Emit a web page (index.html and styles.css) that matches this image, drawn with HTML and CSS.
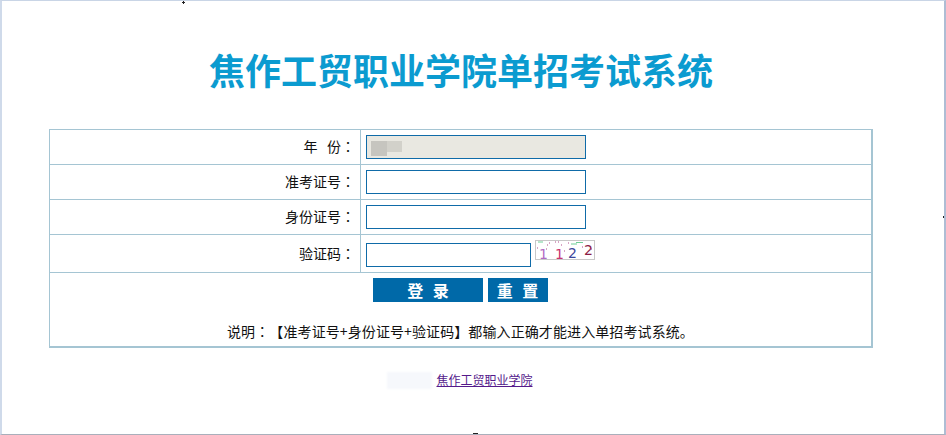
FILE: index.html
```html
<!DOCTYPE html>
<html lang="zh-CN">
<head>
  <meta charset="UTF-8">
  <title>焦作工贸职业学院单招考试系统</title>
  <link rel="stylesheet" href="styles.css">
</head>
<body>
  <div class="frame">
    <span class="mark mark-top"></span>
    <span class="mark mark-right"></span>
    <span class="mark mark-bottom"></span>

    <h1 class="title">焦作工贸职业学院单招考试系统</h1>

    <form class="login">
      <table class="login-table">
        <tr class="row">
          <td class="label">年&nbsp;&nbsp;&nbsp;份<span class="colon" lang="zh-TW">：</span></td>
          <td class="field">
            <span class="year">
              <input class="input input-disabled" type="text" disabled>
              <span class="smudge"><i></i><b></b></span>
            </span>
          </td>
        </tr>
        <tr class="row">
          <td class="label">准考证号<span class="colon" lang="zh-TW">：</span></td>
          <td class="field"><input class="input" type="text"></td>
        </tr>
        <tr class="row">
          <td class="label">身份证号<span class="colon" lang="zh-TW">：</span></td>
          <td class="field"><input class="input" type="text"></td>
        </tr>
        <tr class="row row-code">
          <td class="label">验证码<span class="colon" lang="zh-TW">：</span></td>
          <td class="field">
            <div class="code-wrap">
              <input class="input input-code" type="text">
              <svg class="captcha" width="60" height="20" viewBox="0 0 60 20">
                <rect x="0.5" y="0.5" width="59" height="19" fill="#fff" stroke="#c8c8c8"/>
                <path d="M3 2h5M36 4h6M41 2.500h7" stroke="#6fcf97" stroke-width="1"/>
                <path d="M20 2h1M23 2h1M33 3h1M26 5h1M12 5h1M14 3h1M2 8h1M11 9h1M29 11h1M47 7h1M56 9h1" stroke="#b04a8a" stroke-width="1"/>
                <text class="digit" x="4" y="19" fill="#b06cc4">1</text>
                <text class="digit" x="20" y="19" fill="#c8356f">1</text>
                <text class="digit" x="33" y="18" fill="#3a469c">2</text>
                <text class="digit" x="49" y="15" fill="#8c1c46">2</text>
              </svg>
            </div>
          </td>
        </tr>
        <tr>
          <td class="actions" colspan="2">
            <div class="buttons">
              <button class="btn btn-login" type="button">登 录</button>
              <button class="btn btn-reset" type="reset">重 置</button>
            </div>
            <p class="note">说明<span class="colon" lang="zh-TW">：</span>【准考证号+身份证号+验证码】都输入正确才能进入单招考试系统。</p>
          </td>
        </tr>
      </table>
    </form>

    <div class="footer">
      <span class="smudge-link"></span><a class="school" href="#">焦作工贸职业学院</a>
    </div>
  </div>
</body>
</html>
```

FILE: styles.css
```css
html, body {
  margin: 0;
  padding: 0;
  background: #fff;
}
body {
  font-family: "Noto Sans CJK SC", "Liberation Sans", sans-serif;
  font-size: 14px;
  color: #111;
  text-spacing-trim: space-all;
}
.frame {
  position: relative;
  box-sizing: border-box;
  width: 946px;
  height: 435px;
  overflow: hidden;
  border-style: solid;
  border-width: 1px 2px 1px 2px;
  border-color: #c9d5e6 #aebdd4 #a9afbb #cfdaea;
}
.mark {
  position: absolute;
  background: #222;
}
.mark-top {
  left: 180px;
  top: 1px;
  width: 3px;
  height: 1px;
}
.mark-top::after {
  content: "";
  position: absolute;
  left: 1px;
  top: -1px;
  width: 1px;
  height: 3px;
  background: #222;
}
.mark-right {
  right: 0;
  top: 215px;
  width: 1px;
  height: 2px;
}
.mark-bottom {
  left: 471px;
  bottom: 0;
  width: 5px;
  height: 1px;
}
.title {
  box-sizing: border-box;
  height: 128px;
  margin: 0;
  padding: 40px 24px 0 0;
  font-size: 36px;
  line-height: 56px;
  font-weight: 700;
  text-align: center;
  color: #0b9bd0;
}
.login {
  margin: 0 0 0 47px;
}
.login-table {
  width: 824px;
  border-collapse: collapse;
  table-layout: fixed;
  border-right: 2px solid #a5c5d3;
  border-bottom: 2px solid #a5c5d3;
}
.login-table td {
  border: 1px solid #a5c5d3;
  padding: 0;
}
.row {
  height: 35px;
}
.row-code {
  height: 38px;
}
.login-table .label {
  width: 305px;
  padding: 0 5px 2px 0;
  text-align: right;
  line-height: 20px;
}
.colon {
  font-family: "Noto Sans CJK TC", sans-serif;
}
.login-table .field {
  padding-left: 5px;
}
.input {
  display: block;
  box-sizing: border-box;
  width: 220px;
  height: 24px;
  margin: 0;
  padding: 0 4px;
  border: 1px solid #0f6ba8;
  background: #fff;
}
.input-disabled {
  background: #e9e8e1;
}
.year {
  position: relative;
  display: block;
  width: 220px;
}
.smudge {
  position: absolute;
  left: 5px;
  top: 6px;
  display: flex;
}
.smudge i {
  display: block;
  width: 16px;
  height: 15px;
  background: #c6c5bf;
}
.smudge b {
  display: block;
  width: 15px;
  height: 11px;
  background: #d2d1ca;
}
.code-wrap {
  display: flex;
  align-items: flex-start;
}
.input-code {
  width: 165px;
  margin-top: 3px;
}
.captcha {
  display: block;
  flex: none;
  margin-left: 4px;
  overflow: visible;
}
.digit {
  font-family: "DejaVu Sans", sans-serif;
  font-size: 14px;
}
.actions {
  text-align: center;
}
.buttons {
  display: flex;
  justify-content: center;
  gap: 5px;
  padding-top: 5px;
}
.btn {
  height: 24px;
  padding: 0;
  border: none;
  background: #0069a8;
  color: #fff;
  font-family: "Noto Sans CJK SC", sans-serif;
  font-size: 16px;
  font-weight: 700;
  line-height: 24px;
  letter-spacing: 3px;
  cursor: pointer;
}
.btn-login {
  width: 110px;
  padding-left: 3px;
}
.btn-reset {
  width: 60px;
  padding-left: 2px;
}
.note {
  box-sizing: border-box;
  height: 44px;
  margin: 0;
  padding-top: 17px;
  font-size: 14px;
  line-height: 24px;
  letter-spacing: 0.1px;
  color: #111;
}
.footer {
  display: flex;
  justify-content: center;
  align-items: center;
  margin-top: 22px;
  padding-right: 26px;
  font-size: 12px;
  line-height: 20px;
}
.smudge-link {
  width: 45px;
  height: 17px;
  margin-right: 4px;
  background: #f6f8fc;
  filter: blur(1px);
}
.school {
  color: #551a8b;
  text-decoration: underline;
}
```
